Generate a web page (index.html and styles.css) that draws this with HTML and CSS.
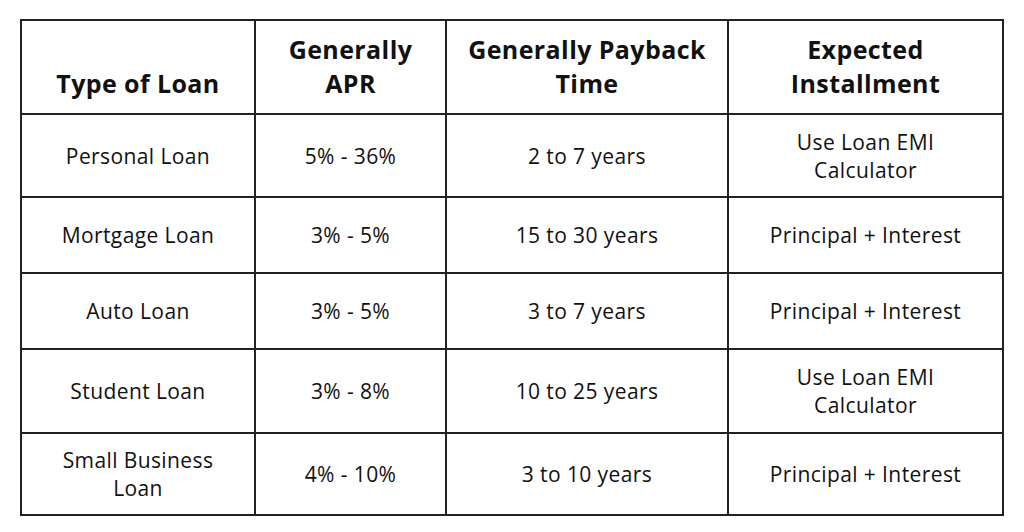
FILE: index.html
```html
<!DOCTYPE html>
<html>
<head>
<meta charset="utf-8">
<link rel="stylesheet" href="styles.css">
</head>
<body>
<table class="loans">
  <colgroup>
    <col class="c1"><col class="c2"><col class="c3"><col class="c4">
  </colgroup>
  <thead>
    <tr>
      <th>Type of Loan</th>
      <th>Generally<br>APR</th>
      <th>Generally Payback<br>Time</th>
      <th>Expected<br>Installment</th>
    </tr>
  </thead>
  <tbody>
    <tr class="r1"><td>Personal Loan</td><td>5% - 36%</td><td>2 to 7 years</td><td>Use Loan EMI<br>Calculator</td></tr>
    <tr class="r2"><td>Mortgage Loan</td><td>3% - 5%</td><td>15 to 30 years</td><td>Principal + Interest</td></tr>
    <tr class="r3"><td>Auto Loan</td><td>3% - 5%</td><td>3 to 7 years</td><td>Principal + Interest</td></tr>
    <tr class="r4"><td>Student Loan</td><td>3% - 8%</td><td>10 to 25 years</td><td>Use Loan EMI<br>Calculator</td></tr>
    <tr class="r5"><td>Small Business<br>Loan</td><td>4% - 10%</td><td>3 to 10 years</td><td>Principal + Interest</td></tr>
  </tbody>
</table>
</body>
</html>
```
FILE: styles.css
```css
html, body {
  margin: 0;
  background: #ffffff;
}
body {
  padding: 19px 0 0 20px;
  font-family: "Open Sans", "Liberation Sans", sans-serif;
  color: #111;
}
.loans {
  border-collapse: collapse;
  width: 982px;
  table-layout: fixed;
}
.c1 { width: 234px; }
.c2 { width: 191px; }
.c3 { width: 282px; }
.c4 { width: 275px; }
.loans th, .loans td {
  border: 2px solid #222;
  text-align: center;
  padding: 0 4px;
}
.loans th {
  height: 94px;
  font-size: 25px;
  font-weight: 700;
  letter-spacing: 0.4px;
  line-height: 34px;
  vertical-align: bottom;
  padding-bottom: 13px;
  box-sizing: border-box;
}
.loans td {
  font-size: 21px;
  letter-spacing: 0.4px;
  line-height: 28px;
  vertical-align: middle;
  box-sizing: border-box;
}
.r1 td { height: 83px; }
.r2 td { height: 76px; }
.r3 td { height: 76px; }
.r4 td { height: 84px; }
.r5 td { height: 82px; }
```
